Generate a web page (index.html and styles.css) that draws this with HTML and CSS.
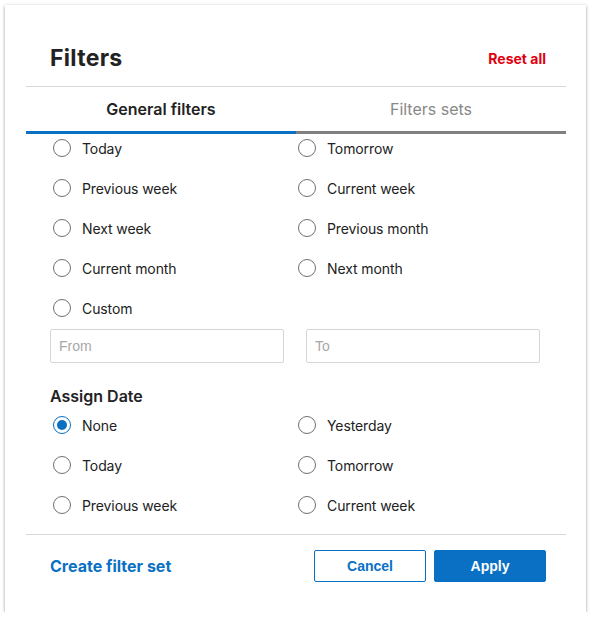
FILE: index.html
```html
<!DOCTYPE html>
<html>
<head>
<meta charset="utf-8">
<link rel="stylesheet" href="styles.css">
</head>
<body>
<div class="card">
  <div class="header">
    <h1 class="title">Filters</h1>
    <a class="reset">Reset all</a>
  </div>
  <div class="tabs">
    <div class="tab active">General filters</div>
    <div class="tab">Filters sets</div>
  </div>
  <div class="content">
    <div class="grid">
      <label class="opt"><span class="radio"></span>Today</label>
      <label class="opt"><span class="radio"></span>Tomorrow</label>
      <label class="opt"><span class="radio"></span>Previous week</label>
      <label class="opt"><span class="radio"></span>Current week</label>
      <label class="opt"><span class="radio"></span>Next week</label>
      <label class="opt"><span class="radio"></span>Previous month</label>
      <label class="opt"><span class="radio"></span>Current month</label>
      <label class="opt"><span class="radio"></span>Next month</label>
      <label class="opt"><span class="radio"></span>Custom</label>
    </div>
    <div class="dates">
      <div class="input">From</div>
      <div class="input">To</div>
    </div>
    <h2 class="section">Assign Date</h2>
    <div class="grid">
      <label class="opt"><span class="radio checked"></span>None</label>
      <label class="opt"><span class="radio"></span>Yesterday</label>
      <label class="opt"><span class="radio"></span>Today</label>
      <label class="opt"><span class="radio"></span>Tomorrow</label>
      <label class="opt"><span class="radio"></span>Previous week</label>
      <label class="opt"><span class="radio"></span>Current week</label>
    </div>
  </div>
  <div class="footer">
    <a class="create">Create filter set</a>
    <div class="actions">
      <button class="btn btn-outline">Cancel</button>
      <button class="btn btn-primary">Apply</button>
    </div>
  </div>
</div>
</body>
</html>
```
FILE: styles.css
```css
html, body {
  margin: 0;
  padding: 0;
  background: #fff;
}
body {
  font-family: Inter, "Noto Sans", sans-serif;
  color: #222;
}
.card {
  margin: 5px 0 0 5px;
  width: 581px;
  height: 607px;
  box-sizing: border-box;
  padding: 0 20px 0 21px;
  background: #fff;
  box-shadow: 0 1px 3px rgba(0,0,0,0.4);
  display: flex;
  flex-direction: column;
}
.header {
  box-sizing: content-box;
  padding: 25px 20px 0 24px;
  height: 56px;
  border-bottom: 1px solid #dadada;
  display: flex;
  align-items: center;
  justify-content: space-between;
}
.title {
  margin: 0;
  font-size: 23px;
  font-weight: 700;
  color: #222;
  letter-spacing: 0.3px;
}
.reset {
  color: #e00010;
  font-size: 14px;
  font-weight: 700;
}
.tabs {
  display: flex;
}
.tab {
  flex: 1;
  height: 44px;
  display: flex;
  align-items: center;
  justify-content: center;
  font-size: 16px;
  color: #888;
  border-bottom: 3px solid #808080;
}
.tab.active {
  color: #222;
  font-weight: 600;
  border-bottom-color: #0a70c4;
}
.content {
  padding: 0 0 0 24px;
  flex: 1;
}
.grid {
  display: grid;
  grid-template-columns: 245px 245px;
  grid-auto-rows: 28px;
  row-gap: 12px;
}
.opt {
  display: flex;
  align-items: center;
  font-size: 14px;
  letter-spacing: -0.1px;
  color: #222;
}
.radio {
  width: 18px;
  height: 18px;
  box-sizing: border-box;
  border: 1px solid #707070;
  border-radius: 50%;
  margin: 0 11px 0 3px;
  display: flex;
  align-items: center;
  justify-content: center;
}
.radio.checked {
  border: 1.5px solid #0a70c4;
}
.radio.checked::after {
  content: "";
  width: 10px;
  height: 10px;
  border-radius: 50%;
  background: #0a70c4;
}
.dates {
  display: flex;
  gap: 22px;
  margin-top: 7px;
  width: 490px;
}
.input {
  flex: 1;
  height: 34px;
  box-sizing: border-box;
  border: 1px solid #d6d6d6;
  border-radius: 2px;
  padding: 0 8px;
  display: flex;
  align-items: center;
  font-family: "Liberation Sans", Arial, sans-serif;
  font-size: 14px;
  color: #a8a8a8;
}
.section {
  margin: 23px 0 5px;
  font-size: 16px;
  line-height: 20px;
  font-weight: 600;
  color: #222;
}
.footer {
  border-top: 1px solid #dadada;
  padding: 15px 0 30px 24px;
  display: flex;
  align-items: center;
  justify-content: space-between;
}
.create {
  color: #0a70c4;
  font-size: 16px;
  font-weight: 700;
}
.actions {
  display: flex;
  gap: 8px;
  margin-right: 20px;
}
.btn {
  width: 112px;
  height: 32px;
  box-sizing: border-box;
  border-radius: 2px;
  font-family: "Liberation Sans", Arial, sans-serif;
  font-size: 14px;
  font-weight: 700;
  cursor: pointer;
}
.btn-outline {
  background: #fff;
  color: #0a70c4;
  border: 1px solid #0a70c4;
}
.btn-primary {
  background: #0a70c4;
  color: #fff;
  border: 1px solid #0a70c4;
}
```
